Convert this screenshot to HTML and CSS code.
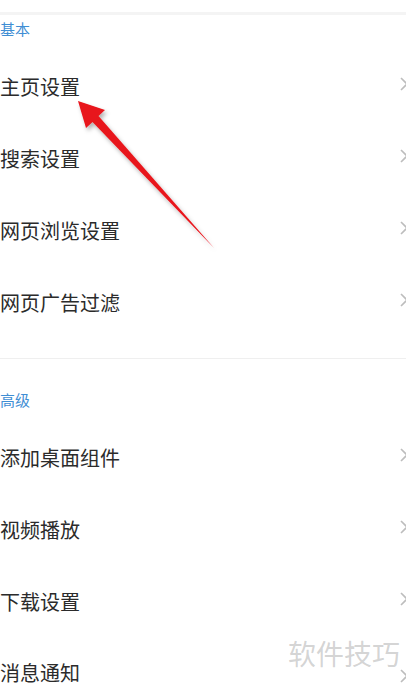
FILE: index.html
```html
<!DOCTYPE html>
<html lang="zh-CN">
<head>
    <meta charset="UTF-8">
    <meta name="viewport" content="width=device-width, initial-scale=1.0">
    <title>设置</title>
    <link rel="stylesheet" href="styles.css">
</head>
<body>
    <div class="topbar"></div>

    <div class="section">
        <div class="section-title">基本</div>
        <div class="item"><span>主页设置</span><svg class="chev" viewBox="0 0 10 16"><path d="M2 2 L8 8 L2 14"/></svg></div>
        <div class="item"><span>搜索设置</span><svg class="chev" viewBox="0 0 10 16"><path d="M2 2 L8 8 L2 14"/></svg></div>
        <div class="item"><span>网页浏览设置</span><svg class="chev" viewBox="0 0 10 16"><path d="M2 2 L8 8 L2 14"/></svg></div>
        <div class="item"><span>网页广告过滤</span><svg class="chev" viewBox="0 0 10 16"><path d="M2 2 L8 8 L2 14"/></svg></div>
    </div>

    <div class="section second">
        <div class="section-title">高级</div>
        <div class="item"><span>添加桌面组件</span><svg class="chev" viewBox="0 0 10 16"><path d="M2 2 L8 8 L2 14"/></svg></div>
        <div class="item"><span>视频播放</span><svg class="chev" viewBox="0 0 10 16"><path d="M2 2 L8 8 L2 14"/></svg></div>
        <div class="item"><span>下载设置</span><svg class="chev" viewBox="0 0 10 16"><path d="M2 2 L8 8 L2 14"/></svg></div>
        <div class="item last"><span>消息通知</span><svg class="chev" viewBox="0 0 10 16"><path d="M2 2 L8 8 L2 14"/></svg></div>
    </div>

    <!-- annotation arrow -->
    <svg class="arrow" viewBox="0 0 406 684">
        <defs>
            <filter id="shade" x="-20%" y="-20%" width="140%" height="140%">
                <feDropShadow dx="2" dy="3" stdDeviation="2" flood-color="#000" flood-opacity="0.3"/>
            </filter>
        </defs>
        <polygon filter="url(#shade)" fill="#e8141b"
                 points="78,101 105,110 98.5,116 214,248 92.5,122 86,128"/>
    </svg>

    <div class="watermark">软件技巧</div>
</body>
</html>
```

FILE: styles.css
```css
html {
    overflow: hidden;
}
body {
    font-family: "Noto Sans CJK SC", "Noto Sans", sans-serif;
    margin: 0;
    padding: 0;
    background: #fff;
    color: #333;
    width: 406px;
    height: 684px;
    overflow: hidden;
    position: relative;
}
.topbar {
    height: 12px;
    background: #fff;
    border-bottom: 3px solid #f4f4f4;
}
.section {
    padding-bottom: 20px;
    border-bottom: 1px solid #efefef;
}
.section.second {
    padding-bottom: 0;
    border-bottom: none;
}
.section-title {
    font-size: 15px;
    line-height: 20px;
    color: #3f8ed4;
    padding: 4px 0 11px 0;
}
.second .section-title {
    padding-top: 31px;
}
.item {
    height: 72px;
    display: flex;
    align-items: center;
    justify-content: space-between;
    font-size: 20px;
    color: #2b2b2b;
}
.item.last {
    height: 47px;
    align-items: flex-end;
}
.item.last span {
    line-height: 24px;
    margin-bottom: -1px;
}
.chev {
    width: 10px;
    height: 16px;
    margin-right: -3px;
    margin-top: -4px;
    fill: none;
    stroke: #bdbdbd;
    stroke-width: 1.6;
}
.arrow {
    position: absolute;
    top: 0;
    left: 0;
    width: 406px;
    height: 684px;
    pointer-events: none;
}
.watermark {
    position: absolute;
    left: 288px;
    top: 634px;
    font-size: 28px;
    line-height: 38px;
    color: rgba(160, 160, 160, 0.45);
}
```
